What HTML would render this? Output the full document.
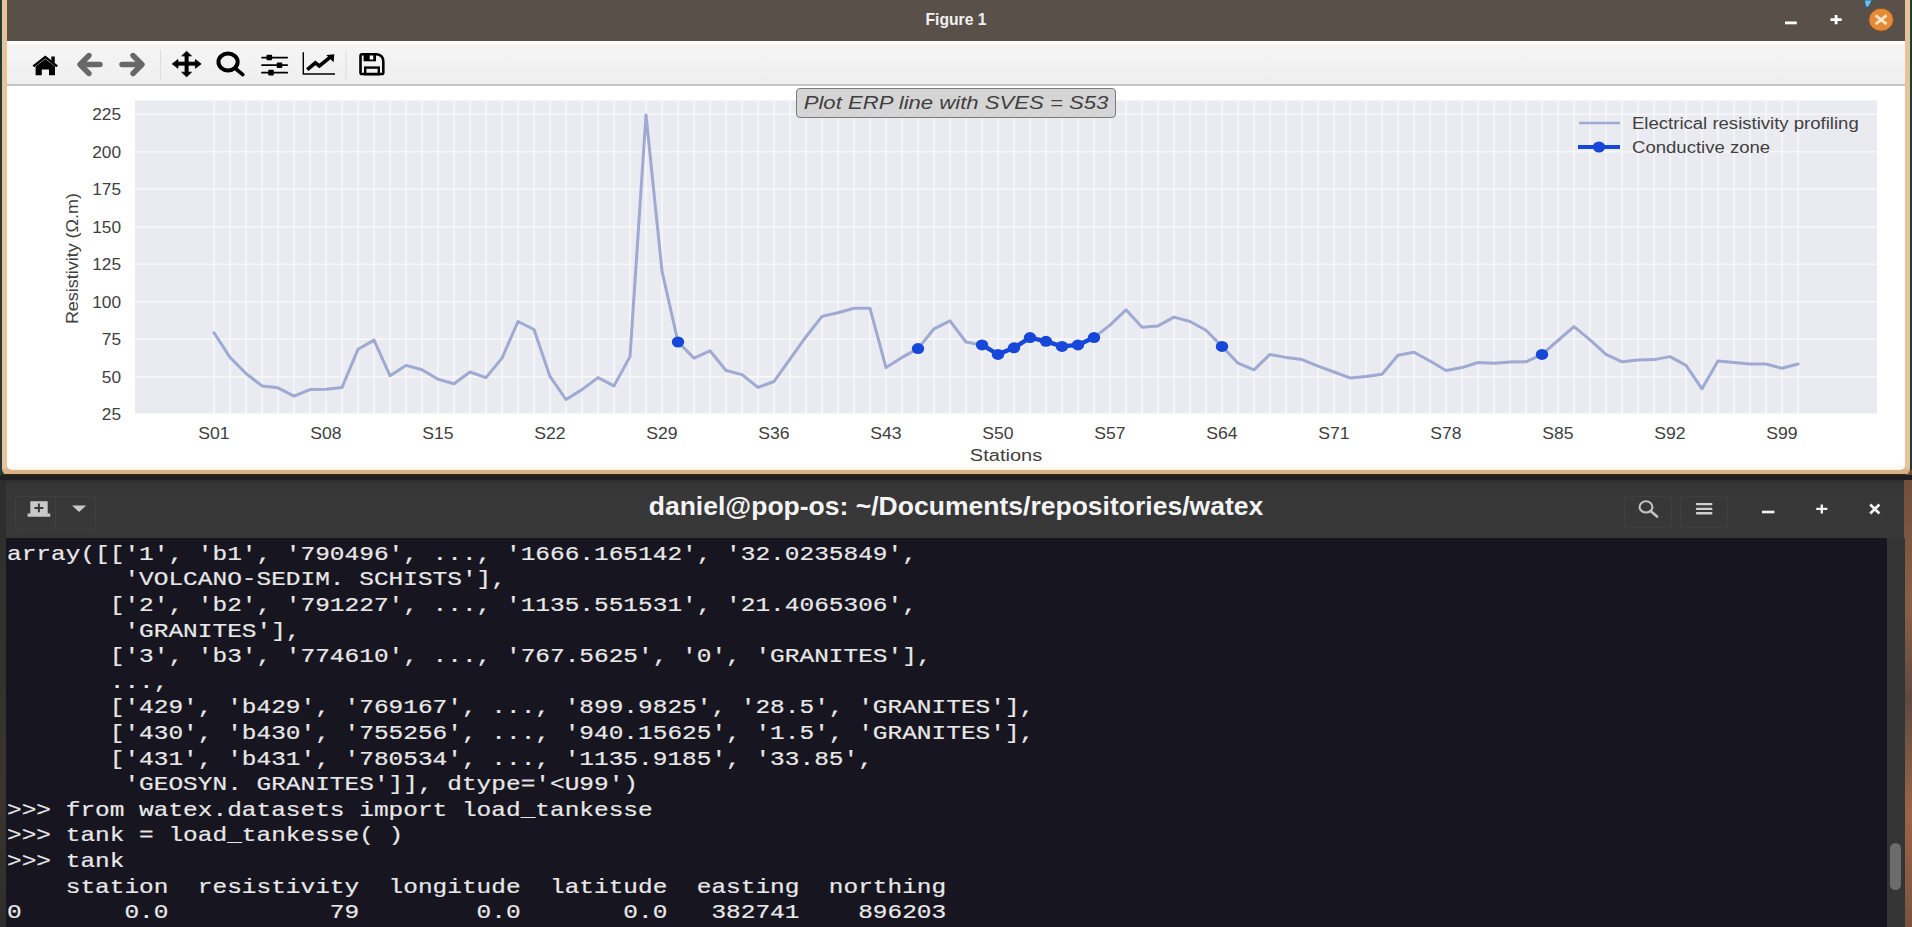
<!DOCTYPE html>
<html><head><meta charset="utf-8">
<style>
html,body{margin:0;padding:0;}
body{width:1912px;height:927px;overflow:hidden;position:relative;background:#2b2a2c;font-family:"Liberation Sans",sans-serif;}
.abs{position:absolute;}
#wall{left:0;top:0;width:1912px;height:927px;}
#fig{left:2px;top:0;width:1908px;height:475px;background:linear-gradient(to bottom,#e6c497 0,#e6c497 469px,#dcb48a 469.5px,#d9ae82 473.5px,#3a2210 473.6px);border-radius:0 0 6px 6px;}
#figin{left:7px;top:0;width:1898px;height:469.5px;background:linear-gradient(to bottom,#fff 0,#fff 463.5px,#fdf8ee 469.5px);border-radius:0 0 5px 5px;overflow:hidden;}
#title{left:7px;top:0;width:1898px;height:41px;background:#5a504a;}
#tbar{left:7px;top:41px;width:1898px;height:43px;background:linear-gradient(to bottom,#fdfdfd 0,#fdfdfd 3px,#f5f5f5 4px,#f0efef 100%);border-bottom:2px solid #c6c5c5;}
#ttl{left:0;width:1912px;top:10.6px;text-align:center;color:#f3f1ef;font-weight:bold;font-size:15.7px;}
#term{left:6px;top:480px;width:1898px;height:447px;background:#171520;}
#thead{left:6px;top:480px;width:1898px;height:58px;background:linear-gradient(to bottom,#2f2f2f 0,#373737 6px,#383838 100%);}
#tttl{left:0;width:1912px;top:490.7px;transform:scaleX(1.02);text-align:center;color:#f4f4f4;font-weight:bold;font-size:26px;}
#sbar{left:1886.5px;top:538px;width:18.5px;height:389px;background:#353535;}
#thumb{left:1890px;top:843px;width:11px;height:47px;background:#6c6c6c;border-radius:6px;}
#txt{left:7px;top:541.7px;margin:0;color:#e8e8e8;font-family:"Liberation Mono",monospace;font-size:21px;line-height:25.61px;letter-spacing:0;white-space:pre;transform:scaleX(1.1645);transform-origin:0 0;-webkit-text-stroke:0.2px #e8e8e8;}
</style></head><body>
<div class="abs" style="left:0;top:0;width:4px;height:475px;background:#1f3b3c"></div>
<div class="abs" style="left:1908px;top:0;width:4px;height:475px;background:#1f3b3c"></div>
<div class="abs" style="left:0;top:475px;width:7px;height:452px;background:linear-gradient(to bottom,#2c2f2d,#33312c 40%,#3a342e 70%,#2e2d2b)"></div>
<div class="abs" style="left:1904px;top:470px;width:8px;height:457px;background:linear-gradient(to bottom,#6e4e3c,#8a5f47 30%,#5f4a40 50%,#9a6548 75%,#7a5240)"></div>
<div class="abs" id="fig"></div>
<div class="abs" id="figin"></div>
<div class="abs" id="title"></div>
<div class="abs" id="ttl">Figure 1</div>

<svg width="1912" height="41" style="position:absolute;left:0;top:0">
 <rect x="1785" y="21.5" width="11.8" height="2.8" fill="#fff"/>
 <path d="M1830.5 19.7H1841.7 M1836.1 15V24.3" stroke="#fff" stroke-width="2.8"/>
 <ellipse cx="1881.1" cy="19.75" rx="12.3" ry="11.4" fill="#e68a35" stroke="#7a5430" stroke-width="1"/>
 <path d="M1875.6 15.4L1886.6 24.1 M1886.6 15.4L1875.6 24.1" stroke="#fbe7c9" stroke-width="2.7"/>
 <path d="M1864.3 0 L1872.3 0 L1868.8 6.6 L1865.8 7.6Z" fill="#6cbcec" stroke="#1f4f78" stroke-width="0.8"/>
</svg>
<div class="abs" id="tbar"></div>

<svg width="1912" height="90" style="position:absolute;left:0;top:0">
 <!-- home -->
 <g fill="#000">
  <path d="M32.5 65.5 L45.3 55.5 L58 65.5 L56.3 67.2 L45.3 58.6 L34.2 67.2Z"/>
  <rect x="51.3" y="56.5" width="3.5" height="6"/>
  <path d="M35.6 66.5 L45.3 59 L55 66.5 V75.2 H49 V69.5 H41.8 V75.2 H35.6Z"/>
 </g>
 <!-- back / fwd -->
 <g fill="none" stroke="#686868" stroke-width="5.4" stroke-linecap="round" stroke-linejoin="round">
  <path d="M100 64.5 H81 M89 55.5 L80 64.5 L89 73.5"/>
  <path d="M122 64.5 H141 M133 55.5 L142 64.5 L133 73.5"/>
 </g>
 <rect x="160" y="50" width="1" height="29" fill="#dcdcdc"/>
 <!-- move -->
 <g fill="#000" stroke="#000" stroke-width="0.8" stroke-linejoin="round">
  <rect x="185" y="55" width="3.2" height="18"/>
  <rect x="177" y="62.1" width="19" height="3.1"/>
  <path d="M186.6 51.3 L191.5 55.9 H181.7Z"/>
  <path d="M186.6 76.8 L191.5 72.2 H181.7Z"/>
  <path d="M172.2 63.9 L178 59.5 V68.3Z"/>
  <path d="M201.1 63.9 L195.4 59.5 V68.3Z"/>
 </g>
 <!-- zoom -->
 <ellipse cx="228.05" cy="61.95" rx="9.6" ry="8.45" fill="none" stroke="#000" stroke-width="4"/>
 <path d="M236 69 L242.8 74.6" stroke="#000" stroke-width="3.6" stroke-linecap="round"/>
 <!-- sliders -->
 <g stroke="#000" stroke-width="1.8" stroke-linecap="round">
  <path d="M262 57.6H287.2 M262 65.05H287.2 M262 72.66H287.2"/>
 </g>
 <g fill="#000">
  <rect x="266.5" y="54.7" width="5.6" height="5.6" rx="1"/>
  <rect x="276.7" y="62.4" width="5.6" height="5.6" rx="1"/>
  <rect x="268.2" y="69.8" width="5.6" height="5.6" rx="1"/>
 </g>
 <!-- chart -->
 <path d="M303.3 52.3 V74 H335" fill="none" stroke="#000" stroke-width="1.4"/>
 <path d="M307.3 69.6 L315.3 62.8 L319.4 66 L330 57.4" fill="none" stroke="#000" stroke-width="3.7" stroke-linejoin="miter"/>
 <path d="M326.3 55 L334.3 54.3 L333.6 62.2Z" fill="#000"/>
 <rect x="345.5" y="50" width="1" height="29" fill="#dcdcdc"/>
 <!-- save -->
 <path d="M362.2 54.3 H376.3 Q383.3 54.8 383.3 61.5 V72.4 Q383.3 74 381.7 74 H362.1 Q360.5 74 360.5 72.4 V55.9 Q360.5 54.3 362.2 54.3Z" fill="none" stroke="#000" stroke-width="2.6"/>
 <path d="M363.6 54 H376 V61.3 H363.6Z" fill="#000"/>
 <rect x="369.7" y="55.5" width="3.6" height="4" fill="#fff"/>
 <rect x="365.2" y="67.6" width="13.6" height="6.6" fill="none" stroke="#000" stroke-width="2.4"/>
</svg>
<svg class="abs" style="left:0;top:0" width="1912" height="470" font-family="Liberation Sans, sans-serif">
<rect x="135" y="100.5" width="1742" height="313.0" fill="#eaeaf1"/>
<path d="M135 376.8H1877 M135 339.3H1877 M135 301.8H1877 M135 264.3H1877 M135 226.8H1877 M135 189.3H1877 M135 151.8H1877 M135 114.3H1877 M214 100.5V413.5 M230 100.5V413.5 M246 100.5V413.5 M262 100.5V413.5 M278 100.5V413.5 M294 100.5V413.5 M310 100.5V413.5 M326 100.5V413.5 M342 100.5V413.5 M358 100.5V413.5 M374 100.5V413.5 M390 100.5V413.5 M406 100.5V413.5 M422 100.5V413.5 M438 100.5V413.5 M454 100.5V413.5 M470 100.5V413.5 M486 100.5V413.5 M502 100.5V413.5 M518 100.5V413.5 M534 100.5V413.5 M550 100.5V413.5 M566 100.5V413.5 M582 100.5V413.5 M598 100.5V413.5 M614 100.5V413.5 M630 100.5V413.5 M646 100.5V413.5 M662 100.5V413.5 M678 100.5V413.5 M694 100.5V413.5 M710 100.5V413.5 M726 100.5V413.5 M742 100.5V413.5 M758 100.5V413.5 M774 100.5V413.5 M790 100.5V413.5 M806 100.5V413.5 M822 100.5V413.5 M838 100.5V413.5 M854 100.5V413.5 M870 100.5V413.5 M886 100.5V413.5 M902 100.5V413.5 M918 100.5V413.5 M934 100.5V413.5 M950 100.5V413.5 M966 100.5V413.5 M982 100.5V413.5 M998 100.5V413.5 M1014 100.5V413.5 M1030 100.5V413.5 M1046 100.5V413.5 M1062 100.5V413.5 M1078 100.5V413.5 M1094 100.5V413.5 M1110 100.5V413.5 M1126 100.5V413.5 M1142 100.5V413.5 M1158 100.5V413.5 M1174 100.5V413.5 M1190 100.5V413.5 M1206 100.5V413.5 M1222 100.5V413.5 M1238 100.5V413.5 M1254 100.5V413.5 M1270 100.5V413.5 M1286 100.5V413.5 M1302 100.5V413.5 M1318 100.5V413.5 M1334 100.5V413.5 M1350 100.5V413.5 M1366 100.5V413.5 M1382 100.5V413.5 M1398 100.5V413.5 M1414 100.5V413.5 M1430 100.5V413.5 M1446 100.5V413.5 M1462 100.5V413.5 M1478 100.5V413.5 M1494 100.5V413.5 M1510 100.5V413.5 M1526 100.5V413.5 M1542 100.5V413.5 M1558 100.5V413.5 M1574 100.5V413.5 M1590 100.5V413.5 M1606 100.5V413.5 M1622 100.5V413.5 M1638 100.5V413.5 M1654 100.5V413.5 M1670 100.5V413.5 M1686 100.5V413.5 M1702 100.5V413.5 M1718 100.5V413.5 M1734 100.5V413.5 M1750 100.5V413.5 M1766 100.5V413.5 M1782 100.5V413.5 M1798 100.5V413.5" stroke="#f8f8fb" stroke-width="1.6" fill="none"/>
<polyline points="214,332.8 230,357.4 246,373.5 262,385.9 278,387.8 294,396.2 310,389.6 326,389.3 342,387.4 358,349.3 374,340.1 390,375.7 406,365.4 422,369.8 438,379.3 454,383.7 470,372 486,377.6 502,358.1 518,321.5 534,329.5 550,376.4 566,399.5 582,389.6 598,377.6 614,385.9 630,356.6 646,114.9 662,271.2 678,342 694,358.1 710,350.8 726,370.5 742,374.6 758,387.4 774,381.5 790,359.1 806,336.7 822,316.4 838,312.7 854,308.3 870,308.3 886,367.6 902,357.4 918,348.6 934,328.8 950,320.8 966,342 982,344.9 998,354.4 1014,347.8 1030,337.6 1046,341.3 1062,346.4 1078,344.9 1094,337.6 1110,325.1 1126,309.8 1142,327.3 1158,325.9 1174,317.1 1190,321.5 1206,330.3 1222,346.4 1238,363.2 1254,369.8 1270,354.4 1286,357.4 1302,359.6 1318,366.1 1334,372 1350,377.9 1366,376.4 1382,374.2 1398,355.2 1414,352.2 1430,361 1446,370.5 1462,367.6 1478,362.5 1494,363.2 1510,362 1526,361.8 1542,354.4 1558,340.5 1574,326.6 1590,339.8 1606,354.4 1622,361.8 1638,360 1654,359.6 1670,356.6 1686,365.4 1702,388.8 1718,361 1734,362.5 1750,364 1766,364 1782,368.3 1798,364" fill="none" stroke="#9eaad2" stroke-width="3" stroke-linejoin="round" stroke-linecap="round"/>
<polyline points="982,344.9 998,354.4 1014,347.8 1030,337.6 1046,341.3 1062,346.4 1078,344.9 1094,337.6" fill="none" stroke="#1747d9" stroke-width="4.4" stroke-linejoin="round"/>
<ellipse cx="678" cy="342" rx="6.2" ry="5.5" fill="#1747d9"/>
<ellipse cx="918" cy="348.6" rx="6.2" ry="5.5" fill="#1747d9"/>
<ellipse cx="982" cy="344.9" rx="6.2" ry="5.5" fill="#1747d9"/>
<ellipse cx="998" cy="354.4" rx="6.2" ry="5.5" fill="#1747d9"/>
<ellipse cx="1014" cy="347.8" rx="6.2" ry="5.5" fill="#1747d9"/>
<ellipse cx="1030" cy="337.6" rx="6.2" ry="5.5" fill="#1747d9"/>
<ellipse cx="1046" cy="341.3" rx="6.2" ry="5.5" fill="#1747d9"/>
<ellipse cx="1062" cy="346.4" rx="6.2" ry="5.5" fill="#1747d9"/>
<ellipse cx="1078" cy="344.9" rx="6.2" ry="5.5" fill="#1747d9"/>
<ellipse cx="1094" cy="337.6" rx="6.2" ry="5.5" fill="#1747d9"/>
<ellipse cx="1222" cy="346.4" rx="6.2" ry="5.5" fill="#1747d9"/>
<ellipse cx="1542" cy="354.4" rx="6.2" ry="5.5" fill="#1747d9"/>
<text transform="translate(121 420.3) scale(1.047 1)" text-anchor="end" font-size="16.5" fill="#404040" >25</text>
<text transform="translate(121 382.8) scale(1.047 1)" text-anchor="end" font-size="16.5" fill="#404040" >50</text>
<text transform="translate(121 345.3) scale(1.047 1)" text-anchor="end" font-size="16.5" fill="#404040" >75</text>
<text transform="translate(121 307.8) scale(1.047 1)" text-anchor="end" font-size="16.5" fill="#404040" >100</text>
<text transform="translate(121 270.3) scale(1.047 1)" text-anchor="end" font-size="16.5" fill="#404040" >125</text>
<text transform="translate(121 232.8) scale(1.047 1)" text-anchor="end" font-size="16.5" fill="#404040" >150</text>
<text transform="translate(121 195.3) scale(1.047 1)" text-anchor="end" font-size="16.5" fill="#404040" >175</text>
<text transform="translate(121 157.8) scale(1.047 1)" text-anchor="end" font-size="16.5" fill="#404040" >200</text>
<text transform="translate(121 120.30000000000001) scale(1.047 1)" text-anchor="end" font-size="16.5" fill="#404040" >225</text>
<text transform="translate(214 439) scale(1.1 1)" text-anchor="middle" font-size="16" fill="#404040" >S01</text>
<text transform="translate(326 439) scale(1.1 1)" text-anchor="middle" font-size="16" fill="#404040" >S08</text>
<text transform="translate(438 439) scale(1.1 1)" text-anchor="middle" font-size="16" fill="#404040" >S15</text>
<text transform="translate(550 439) scale(1.1 1)" text-anchor="middle" font-size="16" fill="#404040" >S22</text>
<text transform="translate(662 439) scale(1.1 1)" text-anchor="middle" font-size="16" fill="#404040" >S29</text>
<text transform="translate(774 439) scale(1.1 1)" text-anchor="middle" font-size="16" fill="#404040" >S36</text>
<text transform="translate(886 439) scale(1.1 1)" text-anchor="middle" font-size="16" fill="#404040" >S43</text>
<text transform="translate(998 439) scale(1.1 1)" text-anchor="middle" font-size="16" fill="#404040" >S50</text>
<text transform="translate(1110 439) scale(1.1 1)" text-anchor="middle" font-size="16" fill="#404040" >S57</text>
<text transform="translate(1222 439) scale(1.1 1)" text-anchor="middle" font-size="16" fill="#404040" >S64</text>
<text transform="translate(1334 439) scale(1.1 1)" text-anchor="middle" font-size="16" fill="#404040" >S71</text>
<text transform="translate(1446 439) scale(1.1 1)" text-anchor="middle" font-size="16" fill="#404040" >S78</text>
<text transform="translate(1558 439) scale(1.1 1)" text-anchor="middle" font-size="16" fill="#404040" >S85</text>
<text transform="translate(1670 439) scale(1.1 1)" text-anchor="middle" font-size="16" fill="#404040" >S92</text>
<text transform="translate(1782 439) scale(1.1 1)" text-anchor="middle" font-size="16" fill="#404040" >S99</text>
<text transform="translate(1006 460.5) scale(1.25 1)" text-anchor="middle" font-size="16" fill="#404040" >Stations</text>
<text transform="translate(78.4 258.6) rotate(-90) scale(1.056 1)" text-anchor="middle" font-size="17" fill="#404040">Resistivity (Ω.m)</text>
<path d="M1579 123H1620" stroke="#a0aad0" stroke-width="2.5"/>
<path d="M1578 147H1620" stroke="#1747d9" stroke-width="4.2"/>
<ellipse cx="1599" cy="147" rx="6.2" ry="5.5" fill="#1747d9"/>
<text transform="translate(1632 128.5) scale(1.16 1)" text-anchor="start" font-size="16" fill="#404040" >Electrical resistivity profiling</text>
<text transform="translate(1632 152.5) scale(1.16 1)" text-anchor="start" font-size="16" fill="#404040" >Conductive zone</text>
<rect x="796.5" y="88.5" width="319" height="29" rx="3.5" fill="#d5d5d6" stroke="#7b7b7b" stroke-width="1"/>
<text transform="translate(956 108.7) scale(1.165 1)" text-anchor="middle" font-size="19" fill="#404040" font-style="italic">Plot ERP line with SVES = S53</text>
</svg>
<div class="abs" style="left:0;top:475px;width:1912px;height:5px;background:#201f22"></div>
<div class="abs" id="term"></div>
<div class="abs" id="thead"></div>
<svg class="abs" style="left:0;top:0" width="1912" height="540">
 <g fill="none" stroke="#3f3f3f" stroke-width="1">
  <rect x="15.5" y="496.5" width="80" height="33" rx="2"/>
  <path d="M55.5 497V529"/>
  <rect x="1624.5" y="496.5" width="47" height="31" rx="2"/>
  <rect x="1680.5" y="496.5" width="47" height="31" rx="2"/>
 </g>
 <g fill="#c9c9c9">
  <path d="M30.3 501.3H47.7V513.6H50.3V516.8H27.6V513.6H30.3Z"/>
  <path d="M72 505.6H86.2L79.1 512Z"/>
 </g>
 <path d="M38.9 503.6V512.2 M34.4 508H43.4" stroke="#383838" stroke-width="2"/>
 <ellipse cx="1646" cy="506.9" rx="6.4" ry="5.6" fill="none" stroke="#c4c4c4" stroke-width="2.1"/>
 <path d="M1651.2 511.6L1657 516.6" stroke="#c4c4c4" stroke-width="2.6" stroke-linecap="round"/>
 <path d="M1697 504.1H1711.3 M1697 508.9H1711.3 M1697 513.3H1711.3" stroke="#d0d0d0" stroke-width="2.4" stroke-linecap="round"/>
 <rect x="1762" y="510.7" width="12.4" height="2.6" fill="#f2f2f2"/>
 <path d="M1816.2 508.9H1827.4 M1821.8 504.4V513.6" stroke="#f2f2f2" stroke-width="2.4"/>
 <path d="M1870.2 504.6L1879.4 513.4 M1879.4 504.6L1870.2 513.4" stroke="#f2f2f2" stroke-width="2.7"/>
</svg>
<div class="abs" id="tttl">daniel@pop-os: ~/Documents/repositories/watex</div>
<div class="abs" id="sbar"></div>
<div class="abs" id="thumb"></div>
<pre class="abs" id="txt">array([[&#x27;1&#x27;, &#x27;b1&#x27;, &#x27;790496&#x27;, ..., &#x27;1666.165142&#x27;, &#x27;32.0235849&#x27;,
        &#x27;VOLCANO-SEDIM. SCHISTS&#x27;],
       [&#x27;2&#x27;, &#x27;b2&#x27;, &#x27;791227&#x27;, ..., &#x27;1135.551531&#x27;, &#x27;21.4065306&#x27;,
        &#x27;GRANITES&#x27;],
       [&#x27;3&#x27;, &#x27;b3&#x27;, &#x27;774610&#x27;, ..., &#x27;767.5625&#x27;, &#x27;0&#x27;, &#x27;GRANITES&#x27;],
       ...,
       [&#x27;429&#x27;, &#x27;b429&#x27;, &#x27;769167&#x27;, ..., &#x27;899.9825&#x27;, &#x27;28.5&#x27;, &#x27;GRANITES&#x27;],
       [&#x27;430&#x27;, &#x27;b430&#x27;, &#x27;755256&#x27;, ..., &#x27;940.15625&#x27;, &#x27;1.5&#x27;, &#x27;GRANITES&#x27;],
       [&#x27;431&#x27;, &#x27;b431&#x27;, &#x27;780534&#x27;, ..., &#x27;1135.9185&#x27;, &#x27;33.85&#x27;,
        &#x27;GEOSYN. GRANITES&#x27;]], dtype=&#x27;&lt;U99&#x27;)
&gt;&gt;&gt; from watex.datasets import load_tankesse
&gt;&gt;&gt; tank = load_tankesse( )
&gt;&gt;&gt; tank
    station  resistivity  longitude  latitude  easting  northing
0       0.0           79        0.0       0.0   382741    896203</pre>
</body></html>
